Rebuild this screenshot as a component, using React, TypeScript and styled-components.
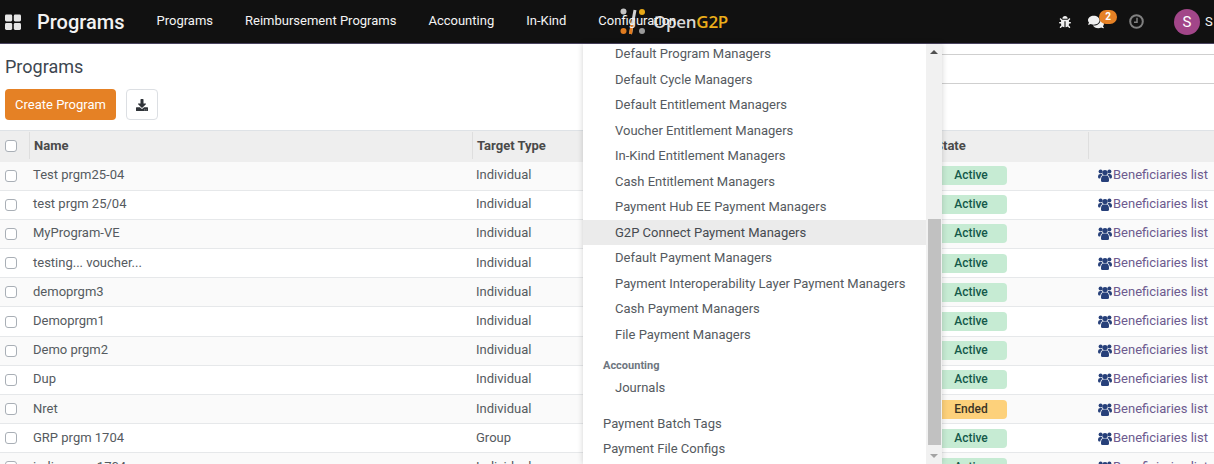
import React from "react";
import styled, { createGlobalStyle } from "styled-components";
import { FaBug, FaComments, FaDownload } from "react-icons/fa";

const GlobalStyle = createGlobalStyle`
  html, body {
    margin: 0;
    padding: 0;
    height: 464px;
    overflow: hidden;
    background: #fff;
    font-family: Roboto, "Liberation Sans", sans-serif;
    font-size: 13px;
    color: #4c4c4c;
  }
`;

const Page = styled.div`
  position: relative;
  width: 1214px;
  height: 464px;
  overflow: hidden;
`;

const Navbar = styled.header`
  position: relative;
  display: flex;
  align-items: center;
  height: 43px;
  padding-left: 5px;
  background: #111111;
  border-bottom: 1px solid #4a4460;
  color: #fff;
`;

const AppsIcon = styled.svg`
  width: 16px;
  height: 16px;
  flex: none;
`;

const Brand = styled.span`
  margin-left: 16px;
  margin-right: 16px;
  font-size: 20px;
  font-weight: 500;
  color: #f2f2f2;
`;

const NavItem = styled.span`
  position: relative;
  z-index: 1;
  padding: 0 16px;
  margin-bottom: 2px;
  font-size: 13px;
  color: #f4f4f4;
`;

const Logo = styled.div`
  position: absolute;
  left: 620px;
  top: 8px;
  display: flex;
  align-items: center;
  gap: 3px;
`;

const LogoText = styled.span`
  font-family: "Open Sans", sans-serif;
  font-size: 17px;
  font-weight: 600;
  letter-spacing: -0.3px;
  line-height: 26px;
  color: #d9d9d9;
`;

const LogoAccent = styled.span`
  color: #ecae1a;
`;

const NavTools = styled.div`
  display: flex;
  align-items: center;
  margin-left: auto;
  height: 100%;
`;

const ToolIcon = styled.span<{ $w: number; $gap?: number }>`
  position: relative;
  display: flex;
  align-items: center;
  justify-content: center;
  width: ${(p) => p.$w}px;
  margin-left: ${(p) => p.$gap ?? 0}px;
  color: #efefef;
`;

const Badge = styled.span`
  position: absolute;
  left: 11px;
  top: -4px;
  width: 18px;
  height: 14px;
  border-radius: 7px;
  background: #e58125;
  color: #fff;
  font-size: 10px;
  font-weight: 700;
  line-height: 14px;
  text-align: center;
`;

const Avatar = styled.span`
  display: flex;
  align-items: center;
  justify-content: center;
  width: 26px;
  height: 26px;
  margin-left: 30px;
  margin-right: 5px;
  border-radius: 50%;
  background: #a24689;
  color: #fff;
  font-size: 15px;
`;

const UserName = styled.span`
  width: 9px;
  overflow: hidden;
  font-size: 13px;
  color: #f4f4f4;
`;

const ControlPanel = styled.section`
  display: flex;
  justify-content: space-between;
  height: 86px;
  box-sizing: border-box;
  padding-left: 5px;
`;

const ControlLeft = styled.div`
  display: flex;
  flex-direction: column;
`;

const Title = styled.h1`
  margin: 11px 0 0;
  font-size: 18px;
  font-weight: 400;
  line-height: 24px;
  color: #3d4650;
`;

const ButtonRow = styled.div`
  display: flex;
  gap: 10px;
  margin-top: 10px;
`;

const PrimaryButton = styled.button`
  width: 111px;
  height: 31px;
  padding: 0;
  border: none;
  border-radius: 4px;
  background: #e58125;
  color: #fff;
  font-family: inherit;
  font-size: 13px;
`;

const IconButton = styled.button`
  display: flex;
  align-items: center;
  justify-content: center;
  width: 32px;
  height: 31px;
  padding: 0;
  background: #fff;
  border: 1px solid #dcdfe3;
  border-radius: 4px;
  color: #2f3338;
  font-size: 12px;
`;

const SearchBox = styled.div`
  width: 620px;
  height: 28px;
  margin-top: 10px;
  border-top: 1px solid #cfcfcf;
  border-bottom: 1px solid #cfcfcf;
`;

const columns = "29px 443px 465px 151px 1fr";

const Table = styled.div`
  border-top: 1px solid #dee2e6;
`;

const HeadRow = styled.div`
  display: grid;
  grid-template-columns: ${columns};
  height: 30.5px;
  background: #eeeeee;
  font-weight: 700;
  color: #4a4a4a;
`;

const HeadCell = styled.div<{ $line?: boolean; $flush?: boolean }>`
  display: flex;
  align-items: center;
  padding-left: ${(p) => (p.$flush ? "0" : "4px")};
  border-left: ${(p) => (p.$line ? "1px solid #dedede" : "none")};
  margin: 1px 0 2.5px ${(p) => (p.$flush ? "-2px" : "0")};
`;

const Row = styled.div`
  display: grid;
  grid-template-columns: ${columns};
  height: 29.2px;
  box-sizing: border-box;
  border-bottom: 1px solid #e6e8ea;
  background: #ffffff;
  color: #555a60;

  &:nth-child(even) {
    background: #fafafa;
  }
`;

const Cell = styled.div`
  display: flex;
  align-items: center;
  padding-left: 4px;
  padding-bottom: 2px;
  white-space: nowrap;
  overflow: hidden;
`;

const StateCell = styled.div`
  display: flex;
  align-items: center;
  padding-left: 4px;
`;

const CheckCell = styled.div`
  display: flex;
  align-items: center;
  padding-left: 5px;
`;

const Check = styled.span`
  display: block;
  width: 10px;
  height: 10px;
  border: 1px solid #a9afb6;
  border-radius: 3px;
  background: #fff;
`;

const StateBadge = styled.span<{ $ended?: boolean }>`
  width: 72px;
  height: 19px;
  margin-left: -6px;
  border-radius: 4px;
  background: ${(p) => (p.$ended ? "#fdd17b" : "#c6ebd3")};
  color: ${(p) => (p.$ended ? "#3b3526" : "#14594a")};
  font-weight: 500;
  font-size: 12px;
  line-height: 18px;
  text-align: center;
`;

const ListLink = styled.span`
  display: flex;
  align-items: center;
  gap: 1px;
  padding-left: 6px;
  color: #6d5b8f;
`;

const UsersIcon = styled.svg`
  width: 14px;
  height: 13px;
  margin-top: 2px;
  flex: none;
  fill: #27407a;
`;

const Dropdown = styled.nav`
  position: absolute;
  left: 583px;
  top: 44px;
  display: flex;
  width: 359px;
  height: 420px;
  background: #fff;
  box-shadow: 0 0 6px rgba(0, 0, 0, 0.18);
  overflow: hidden;
`;

const MenuList = styled.div`
  flex: 1;
  margin-top: -3px;
  color: #555a60;
`;

const MenuItem = styled.div<{ $active?: boolean; $top?: boolean }>`
  height: 25.5px;
  line-height: 25.5px;
  padding-left: ${(p) => (p.$top ? "20px" : "32px")};
  background: ${(p) => (p.$active ? "#ebebeb" : "transparent")};
  color: ${(p) => (p.$active ? "#464a50" : "inherit")};
  white-space: nowrap;
`;

const MenuHeading = styled.div`
  margin-top: 8px;
  height: 20px;
  line-height: 21px;
  padding-left: 20px;
  font-size: 11px;
  font-weight: 700;
  color: #6e7680;
`;

const MenuGap = styled.div`
  height: 10px;
`;

const ScrollTrack = styled.div`
  display: flex;
  flex-direction: column;
  align-items: center;
  width: 16px;
  background: #f1f1f1;
`;

const ScrollArrow = styled.span<{ $down?: boolean }>`
  width: 0;
  height: 0;
  margin: 6px 0;
  border-left: 4px solid transparent;
  border-right: 4px solid transparent;
  border-bottom: ${(p) => (p.$down ? "none" : "4px solid #505050")};
  border-top: ${(p) => (p.$down ? "4px solid #a3a3a3" : "none")};
`;

const ScrollThumb = styled.div`
  width: 13px;
  height: 232px;
  margin-top: 159px;
  margin-bottom: 3px;
  background: #c1c1c1;
`;

type Program = { name: string; target: string; state: string };

const programs: Program[] = [
  { name: "Test prgm25-04", target: "Individual", state: "Active" },
  { name: "test prgm 25/04", target: "Individual", state: "Active" },
  { name: "MyProgram-VE", target: "Individual", state: "Active" },
  { name: "testing... voucher...", target: "Individual", state: "Active" },
  { name: "demoprgm3", target: "Individual", state: "Active" },
  { name: "Demoprgm1", target: "Individual", state: "Active" },
  { name: "Demo prgm2", target: "Individual", state: "Active" },
  { name: "Dup", target: "Individual", state: "Active" },
  { name: "Nret", target: "Individual", state: "Ended" },
  { name: "GRP prgm 1704", target: "Group", state: "Active" },
  { name: "indiv prgm 1704", target: "Individual", state: "Active" },
];

const managers = [
  "Default Program Managers",
  "Default Cycle Managers",
  "Default Entitlement Managers",
  "Voucher Entitlement Managers",
  "In-Kind Entitlement Managers",
  "Cash Entitlement Managers",
  "Payment Hub EE Payment Managers",
  "G2P Connect Payment Managers",
  "Default Payment Managers",
  "Payment Interoperability Layer Payment Managers",
  "Cash Payment Managers",
  "File Payment Managers",
];

function App() {
  return (
    <Page>
      <GlobalStyle />
      <Navbar>
        <AppsIcon viewBox="0 0 16 16">
          <rect x="0" y="0.5" width="7.2" height="7" rx="1.4" fill="#e6e6e6" />
          <rect x="8.8" y="0.5" width="7.2" height="7" rx="1.4" fill="#e6e6e6" />
          <rect x="0" y="9" width="7.2" height="7" rx="1.4" fill="#e6e6e6" />
          <rect x="8.8" y="9" width="7.2" height="7" rx="1.4" fill="#e6e6e6" />
        </AppsIcon>
        <Brand>Programs</Brand>
        <NavItem>Programs</NavItem>
        <NavItem>Reimbursement Programs</NavItem>
        <NavItem>Accounting</NavItem>
        <NavItem>In-Kind</NavItem>
        <NavItem>Configuration</NavItem>
        <Logo>
          <svg width="30" height="28" viewBox="0 0 30 28">
            <circle cx="3.5" cy="3.5" r="3" fill="#c4c4c4" />
            <circle cx="3.5" cy="23" r="3" fill="#e07b1f" />
            <circle cx="22" cy="4" r="3" fill="#e6a817" />
            <circle cx="22" cy="23" r="3" fill="#9a9a9a" />
            <path d="M15 2 L10.5 26" stroke="#d4d4d4" strokeWidth="3" />
            <path d="M12 16 L10.5 26" stroke="#e07b1f" strokeWidth="3" />
          </svg>
          <LogoText>
            Open<LogoAccent>G2P</LogoAccent>
          </LogoText>
        </Logo>
        <NavTools>
          <ToolIcon $w={12}>
            <FaBug size={12} />
          </ToolIcon>
          <ToolIcon $w={16} $gap={17}>
            <FaComments size={16} />
            <Badge>2</Badge>
          </ToolIcon>
          <ToolIcon $w={15} $gap={25}>
            <svg width="15" height="15" viewBox="0 0 15 15" fill="none" stroke="#808080">
              <circle cx="7.5" cy="7.5" r="6.3" strokeWidth="2" />
              <path d="M8 3.8 V8.2 H5" strokeWidth="1.5" />
            </svg>
          </ToolIcon>
          <Avatar>S</Avatar>
          <UserName>S</UserName>
        </NavTools>
      </Navbar>

      <ControlPanel>
        <ControlLeft>
          <Title>Programs</Title>
          <ButtonRow>
            <PrimaryButton>Create Program</PrimaryButton>
            <IconButton>
              <FaDownload />
            </IconButton>
          </ButtonRow>
        </ControlLeft>
        <SearchBox />
      </ControlPanel>

      <Table>
        <HeadRow>
          <CheckCell>
            <Check />
          </CheckCell>
          <HeadCell $line>Name</HeadCell>
          <HeadCell $line>Target Type</HeadCell>
          <HeadCell $flush>State</HeadCell>
          <HeadCell $line />
        </HeadRow>
        {programs.map((p) => (
          <Row key={p.name}>
            <CheckCell>
              <Check />
            </CheckCell>
            <Cell>{p.name}</Cell>
            <Cell>{p.target}</Cell>
            <StateCell>
              <StateBadge $ended={p.state === "Ended"}>{p.state}</StateBadge>
            </StateCell>
            <Cell>
              <ListLink>
                <UsersIcon viewBox="0 0 14 13">
                  <circle cx="7" cy="3.6" r="2.7" />
                  <circle cx="2.6" cy="2.4" r="2" />
                  <circle cx="11.4" cy="2.4" r="2" />
                  <path d="M3 11.4 Q3 7 5 6.6 H9 Q11 7 11 11.4 Q11 13 9.6 13 H4.4 Q3 13 3 11.4 Z" />
                  <path d="M0 7.4 Q0 4.9 2 4.9 H3.8 Q4.2 5.8 4.7 6.1 Q2.6 6.6 2.2 9.4 H1 Q0 9.4 0 7.4 Z" />
                  <path d="M14 7.4 Q14 4.9 12 4.9 H10.2 Q9.8 5.8 9.3 6.1 Q11.4 6.6 11.8 9.4 H13 Q14 9.4 14 7.4 Z" />
                </UsersIcon>
                Beneficiaries list
              </ListLink>
            </Cell>
          </Row>
        ))}
      </Table>

      <Dropdown>
        <MenuList>
          {managers.map((m) => (
            <MenuItem key={m} $active={m.startsWith("G2P")}>
              {m}
            </MenuItem>
          ))}
          <MenuHeading>Accounting</MenuHeading>
          <MenuItem>Journals</MenuItem>
          <MenuGap />
          <MenuItem $top>Payment Batch Tags</MenuItem>
          <MenuItem $top>Payment File Configs</MenuItem>
        </MenuList>
        <ScrollTrack>
          <ScrollArrow />
          <ScrollThumb />
          <ScrollArrow $down />
        </ScrollTrack>
      </Dropdown>
    </Page>
  );
}

export default App;
